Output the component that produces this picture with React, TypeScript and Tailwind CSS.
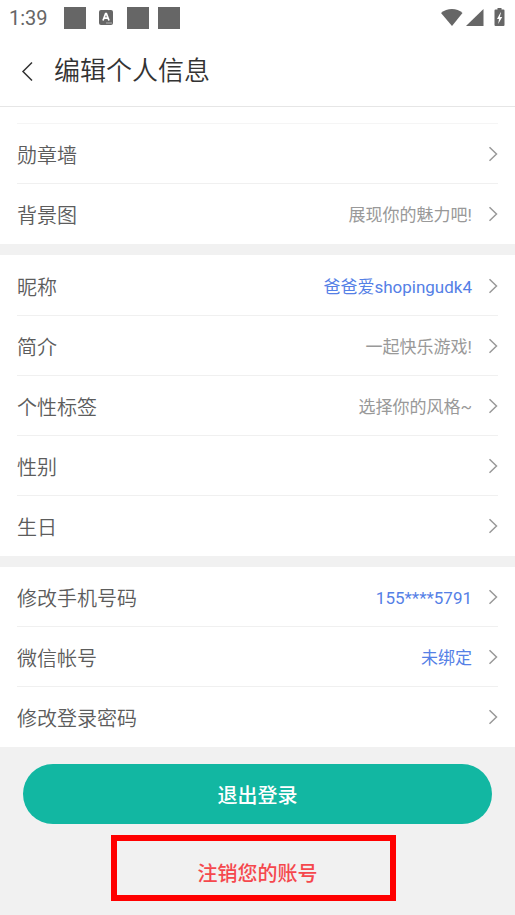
import React from "react";

type Item = { label: string; value?: string; tone?: "muted" | "link" };

const groups: Item[][] = [
  [{ label: "勋章墙" }, { label: "背景图", value: "展现你的魅力吧!" }],
  [
    { label: "昵称", value: "爸爸爱shopingudk4", tone: "link" },
    { label: "简介", value: "一起快乐游戏!" },
    { label: "个性标签", value: "选择你的风格~" },
    { label: "性别" },
    { label: "生日" },
  ],
  [
    { label: "修改手机号码", value: "155****5791", tone: "link" },
    { label: "微信帐号", value: "未绑定", tone: "link" },
    { label: "修改登录密码" },
  ],
];

const groupPadding = ["pt-4", "pt-px", "pt-0"];

function StatusBar() {
  return (
    <div className="flex h-[35px] items-center justify-between pl-[9px] pr-2 text-[#666]">
      <div className="flex items-center">
        <span className="w-[55px] text-[20px] leading-6">1:39</span>
        <span className="size-[22px] bg-[#666]" />
        <svg className="ml-[13px] h-[15px] w-[14px]" viewBox="0 0 14 15" aria-hidden="true">
          <rect width="14" height="15" rx="2" fill="#666" />
          <path d="M4 10.5 6.6 3.6h.8L10 10.5M5 8.2h4" fill="none" stroke="#fff" strokeWidth="1.7" />
          <path d="M7.5 13h1M9.5 13h1M11.5 13h1" stroke="#fff" strokeWidth="1" />
        </svg>
        <span className="ml-[14px] size-[22px] bg-[#666]" />
        <span className="ml-[9px] size-[22px] bg-[#666]" />
      </div>
      <svg className="h-5 w-[66px]" viewBox="0 0 66 20" fill="#666" aria-hidden="true">
        <path d="M0 5C6 -.2 16 -.2 21.500 5L11 18Z" />
        <path d="M42.500 1V18H25Z" />
        <path d="M56.500 0h4v1.500h2q1 0 1 1V17q0 1-1 1h-8q-1 0-1-1V2.500q0-1 1-1h2Z" />
        <path d="M59.500 4.500 56 11h2l-.8 5 4-7h-2.400l1.200-4.500Z" fill="#fff" />
      </svg>
    </div>
  );
}

function Row({ label, value, tone }: Item) {
  return (
    <button type="button" className="flex h-[60px] w-full items-center text-left">
      <span className="flex-1 pt-1 text-[20px] leading-7 font-[350] text-[#5c5c5c]">{label}</span>
      {value && (
        <span className={`pt-[2px] text-[17px] leading-6 ${tone === "link" ? "text-[#5580e6]" : "text-[#999]"}`}>
          {value}
        </span>
      )}
      <svg className="ml-4 h-4 w-[10px]" viewBox="0 0 10 16" fill="none" stroke="#999" strokeWidth="1.5" aria-hidden="true">
        <path d="M1.500 1.200 8.500 8 1.500 14.800" />
      </svg>
    </button>
  );
}

export default function App() {
  return (
    <div className="min-h-screen bg-[#f1f1f1] font-['Roboto','Noto_Sans_CJK_SC',sans-serif]">
      <header className="border-b border-[#e6e6e6] bg-white">
        <StatusBar />
        <div className="flex h-[71px] items-center pl-[21px]">
          <button type="button" aria-label="返回">
            <svg className="h-5 w-3" viewBox="0 0 12 20" fill="none" stroke="#333" strokeWidth="1.500" aria-hidden="true">
              <path d="M11 1.500 2 10.500 11 19.500" />
            </svg>
          </button>
          <h1 className="ml-[21px] text-[26px] leading-9 font-[350] text-[#333]">编辑个人信息</h1>
        </div>
      </header>
      <main>
        <div className="flex flex-col gap-[11px]">
          {groups.map((items, index) => (
            <section key={items[0].label} className={`bg-white px-[17px] ${groupPadding[index]}`}>
              <div className={index === 0 ? "divide-y divide-[#f0f0f0] border-t border-[#f5f5f5]" : "divide-y divide-[#f0f0f0]"}>
                {items.map((item) => (
                  <Row key={item.label} {...item} />
                ))}
              </div>
            </section>
          ))}
        </div>
        <div className="px-[23px] pt-[17px]">
          <button type="button" className="h-[60px] w-full rounded-full bg-[#12b7a2] pt-1 text-[20px] font-medium text-white">
            退出登录
          </button>
        </div>
        <div className="relative mt-[11px] flex h-[66px] justify-center">
          <button type="button" className="pt-3 text-[20px] font-medium text-[#f5484d]">
            注销您的账号
          </button>
          <span className="pointer-events-none absolute inset-y-0 left-[111px] right-[119px] border-6 border-[#f00]" />
        </div>
      </main>
    </div>
  );
}
